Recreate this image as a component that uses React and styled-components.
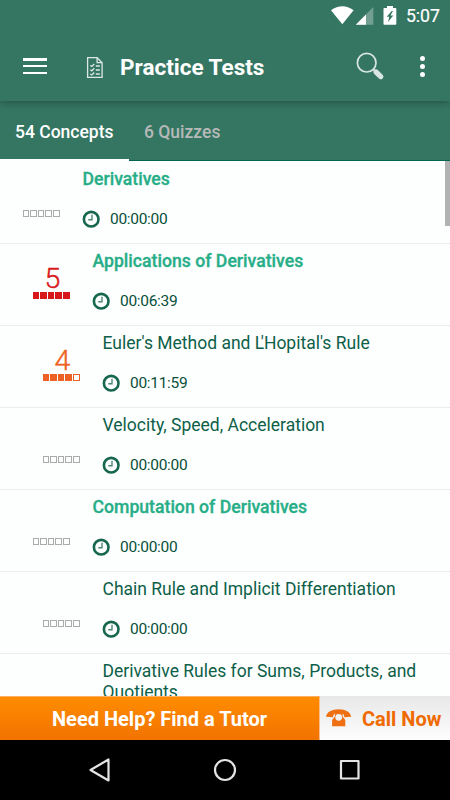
import React from "react";
import styled, { createGlobalStyle } from "styled-components";


const GlobalStyle = createGlobalStyle`
    * {
        box-sizing: border-box;
    }
    body {
        margin: 0;
        background: #000;
        font-family: Roboto, "Open Sans", sans-serif;
    }
    svg {
        display: block;
        flex: none;
    }
`;

const Screen = styled.div`
    width: 450px;
    height: 800px;
    display: flex;
    flex-direction: column;
    overflow: hidden;
    background: #fdfefe;
`;

const Header = styled.header`
    height: 101px;
    flex: none;
    background: #357663;
    color: #fff;
    position: relative;
    box-shadow: 0 1px 8px rgba(0, 0, 0, 0.36);
`;

const StatusBar = styled.div`
    height: 33px;
    display: flex;
    justify-content: flex-end;
    padding: 6px 10px 0 0;
`;

const Clock = styled.span`
    margin-left: 8px;
    font-size: 17.7px;
    line-height: 21px;
    font-weight: 400;
    -webkit-text-stroke: 0.2px #fff;
`;

const Toolbar = styled.div`
    height: 68px;
    display: flex;
    align-items: center;
    padding: 0 24px 1px 23px;
`;

const Title = styled.h1`
    flex: 1;
    margin: 0 0 0 17px;
    font-size: 22.5px;
    line-height: 28px;
    font-weight: 700;
`;

const MenuIcon = styled.div`
    width: 24px;
    height: 18px;
    margin-right: 39px;
    display: flex;
    flex-direction: column;
    justify-content: space-between;
    padding: 0.5px 0 1.5px;
`;

const MenuLine = styled.span`
    height: 2.5px;
    background: #fff;
`;

const Tabs = styled.nav`
    height: 60px;
    flex: none;
    display: flex;
    background: linear-gradient(#357663 59px, #00664d 59px);
`;

const Tab = styled.div`
    width: ${props => props.$width}px;
    height: 60px;
    padding: 20px 0 0 15px;
    font-size: 17.5px;
    line-height: 22px;
    font-weight: 500;
    white-space: nowrap;
    color: ${props => props.$active ? "#fff" : "#b6b9b8"};
    border-bottom: ${props => props.$active ? "2px solid #fff" : "none"};
`;

const Content = styled.main`
    height: 535px;
    flex: none;
    padding-top: 1px;
    overflow: hidden;
    position: relative;
`;

const ScrollThumb = styled.div`
    position: absolute;
    top: 0;
    right: 0;
    width: 5px;
    height: 65px;
    background: #b1b3b2;
`;

const Row = styled.div`
    height: 82px;
    display: flex;
    padding-left: ${props => 22 + props.$level * 10}px;
    border-bottom: 1px solid #ebeeed;
`;

const Score = styled.div`
    width: 60px;
    display: flex;
    flex-direction: column;
    color: ${props => props.$color};
`;

const ScoreValue = styled.div`
    width: 41px;
    height: 48px;
    padding-top: 18px;
    font-size: 28.5px;
    line-height: 34px;
    font-weight: 300;
    text-align: center;
    -webkit-text-stroke: 0.4px currentColor;
`;

const Boxes = styled.div`
    display: flex;
    gap: 1px;
    padding-left: 0.6px;
`;

const Box = styled.span`
    width: 6.6px;
    height: 7px;
    border: 1px solid currentColor;
    background: ${props => props.$filled ? "currentColor" : "transparent"};
`;

const Info = styled.div`
    flex: 1;
    padding: 7px 20px 0 0;
`;

const Name = styled.div`
    height: 40px;
    padding-left: 0.5px;
    font-size: ${props => props.$heading ? 17.65 : 17.5}px;
    line-height: 20.5px;
    font-weight: ${props => props.$heading ? 500 : 400};
    -webkit-text-stroke: ${props => props.$heading ? "0.3px #27ae88" : "0"};
    color: ${props => props.$heading ? "#27ae88" : "#0d5f49"};
`;

// Pulls the apostrophe in next to a capital L
const Kern = styled.span`
    letter-spacing: -3.4px;
`;

const Time = styled.div`
    display: flex;
    align-items: center;
    gap: 10px;
    height: 20px;
    font-size: 15.5px;
    line-height: 20px;
    letter-spacing: -0.3px;
    color: #085039;
`;

const Footer = styled.footer`
    height: 44px;
    flex: none;
    display: flex;
    font-size: 20px;
    line-height: 44px;
    font-weight: 700;
    white-space: nowrap;
`;

const TutorButton = styled.div`
    width: 320px;
    padding-left: 52px;
    color: #fff;
    background: linear-gradient(#ff8c00, #f27300);
    border-top: 1px solid #ffae62;
    border-right: 1px solid #fbbd8c;
`;

const CallButton = styled.div`
    flex: 1;
    display: flex;
    gap: 10px;
    padding: 1px 0 0 6px;
    color: #ef6a00;
    background: linear-gradient(#e8e8e8, #fdfdfd);

    svg {
        margin-top: 12px;
    }
`;

const NavBar = styled.div`
    height: 60px;
    flex: none;
    display: flex;
    align-items: center;
    justify-content: space-between;
    padding: 0 89px 0 87px;
    background: #000;
`;

const concepts = [
    { name: "Derivatives", level: 0, heading: true, time: "00:00:00" },
    { name: "Applications of Derivatives", level: 1, heading: true, time: "00:06:39", score: 5, color: "#d8191c" },
    { name: "Euler's Method and L'Hopital's Rule", level: 2, time: "00:11:59", score: 4, color: "#ed6224" },
    { name: "Velocity, Speed, Acceleration", level: 2, time: "00:00:00" },
    { name: "Computation of Derivatives", level: 1, heading: true, time: "00:00:00" },
    { name: "Chain Rule and Implicit Differentiation", level: 2, time: "00:00:00" },
    { name: "Derivative Rules for Sums, Products, and Quotients", level: 2, time: "00:00:00" },
];


const StatusIcons = () => (
    <svg width="67" height="20" viewBox="0 0 67 20">
        <path d="M0 4.2Q11.3-3.6 22.6 4.2L11.3 18.3Z" fill="#fff" />
        <path d="M42.3 1v17.7H24.8Z" fill="#739f93" />
        <path d="M35 8.5v10.2H24.8Z" fill="#fff" />
        <path fillRule="evenodd" fill="#fff" d="M56 0h6v2h2.6q.7 0 .7.7v15.4q0 .7-.7.7H53.2q-.7 0-.7-.7V2.7q0-.7.7-.7H56ZM60.7 5l-5 5.7h2.6l-1.3 5.3 5.3-6.6h-2.8L62 5Z" />
    </svg>
);

const ChecklistIcon = () => (
    <svg width="17" height="22" viewBox="-1 -1.5 17 22" fill="none" stroke="#dce8e4" strokeWidth="1.3">
        <path d="M.6 .2h9.5l5 5v14.6H.6Z" />
        <path d="M10.1 .2v5h5" />
        <path d="m3.3 8 1.5 1 2.5-2.5M3.3 12.3l1.5 1 2.5-2.5M3.3 16.5l1.5 1L7.3 15M8.8 8.5h4M8.8 12.5h4M8.8 16.5h4" />
    </svg>
);

const SearchIcon = () => (
    <svg width="29" height="29" viewBox="0 0 29 29" fill="none" stroke="#d8e5e1">
        <circle cx="10.7" cy="10.7" r="9.3" strokeWidth="1.7" />
        <path d="m17.2 17.2 2.5 2.5" strokeWidth="2" />
        <path d="m20 20 4.8 4.6" strokeWidth="5.2" strokeLinecap="round" />
    </svg>
);

const MoreIcon = styled.div`
    width: 6px;
    height: 21px;
    margin-left: 35px;
    display: flex;
    flex-direction: column;
    justify-content: space-between;
`;

const Dot = styled.span`
    width: 5.4px;
    height: 5.4px;
    border-radius: 50%;
    background: #fff;
`;

const TimeIcon = () => (
    <svg width="18" height="18" viewBox="0 0 18 18" fill="none">
        <circle cx="9.2" cy="9.2" r="7.3" stroke="#17674f" strokeWidth="2.6" />
        <path d="M10 4.7v5H6.3" stroke="#4e8674" strokeWidth="1.4" />
    </svg>
);

const PhoneIcon = () => (
    <svg width="26" height="18" viewBox="0 0 26 18">
        <path fill="#ef7013" d="M0 7.8C.4 3 6 .2 12.7 .2s12 2.8 12.5 7.6l-6.9.5q-.2-2.4-1-3.2Q12.7 3.2 8 5.1q-.8.8-1 3.2Z" />
        <path fillRule="evenodd" fill="#ef7013" d="M8.8 4.500v3L6.100 11v6.200h13.200V11l-2.700-3.500v-3Q12.700 3 8.800 4.500ZM12.700 4.900a3.400 3.400 0 1 1 0 6.800 3.400 3.400 0 0 1 0-6.800Z" />
    </svg>
);


const ConceptName = ({ text }) => {
    const parts = text.split("L'");

    if (parts.length === 1) {
        return text;
    }
    return <>{parts[0]}<Kern>L</Kern>'{parts[1]}</>;
}

const ConceptRow = ({ concept }) => {
    const { name, level, heading, time, score = 0, color = "#aaabaa" } = concept;

    return (
        <Row $level={level}>
            <Score $color={color}>
                <ScoreValue>{score > 0 ? score : null}</ScoreValue>
                <Boxes>
                    {[1, 2, 3, 4, 5].map(n => <Box key={n} $filled={n <= score} />)}
                </Boxes>
            </Score>
            <Info>
                <Name $heading={heading}>
                    <ConceptName text={name} />
                </Name>
                <Time>
                    <TimeIcon />
                    {time}
                </Time>
            </Info>
        </Row>
    );
}


const App = () => {
    return (
        <Screen>
            <GlobalStyle />
            <Header>
                <StatusBar>
                    <StatusIcons />
                    <Clock>5:07</Clock>
                </StatusBar>
                <Toolbar>
                    <MenuIcon>
                        <MenuLine />
                        <MenuLine />
                        <MenuLine />
                    </MenuIcon>
                    <ChecklistIcon />
                    <Title>Practice Tests</Title>
                    <SearchIcon />
                    <MoreIcon>
                        <Dot />
                        <Dot />
                        <Dot />
                    </MoreIcon>
                </Toolbar>
            </Header>
            <Tabs>
                <Tab $active $width={129}>54 Concepts</Tab>
                <Tab $width={100}>6 Quizzes</Tab>
            </Tabs>
            <Content>
                {concepts.map(concept => <ConceptRow key={concept.name} concept={concept} />)}
                <ScrollThumb />
            </Content>
            <Footer>
                <TutorButton>Need Help? Find a Tutor</TutorButton>
                <CallButton>
                    <PhoneIcon />
                    Call Now
                </CallButton>
            </Footer>
            <NavBar>
                <svg width="24" height="26" viewBox="0 0 24 26" fill="none" stroke="#e4e4e4" strokeWidth="2.2" strokeLinejoin="round">
                    <path d="M21.5 2.5v21L3.5 13Z" />
                </svg>
                <svg width="24" height="24" viewBox="0 0 24 24" fill="none" stroke="#e4e4e4" strokeWidth="2.2">
                    <circle cx="12" cy="12" r="10" />
                </svg>
                <svg width="22" height="22" viewBox="0 0 22 22" fill="none" stroke="#e4e4e4" strokeWidth="2.2" strokeLinejoin="round">
                    <path d="M2 2h17.5v17.5H2Z" />
                </svg>
            </NavBar>
        </Screen>
    );
};

export default App;
